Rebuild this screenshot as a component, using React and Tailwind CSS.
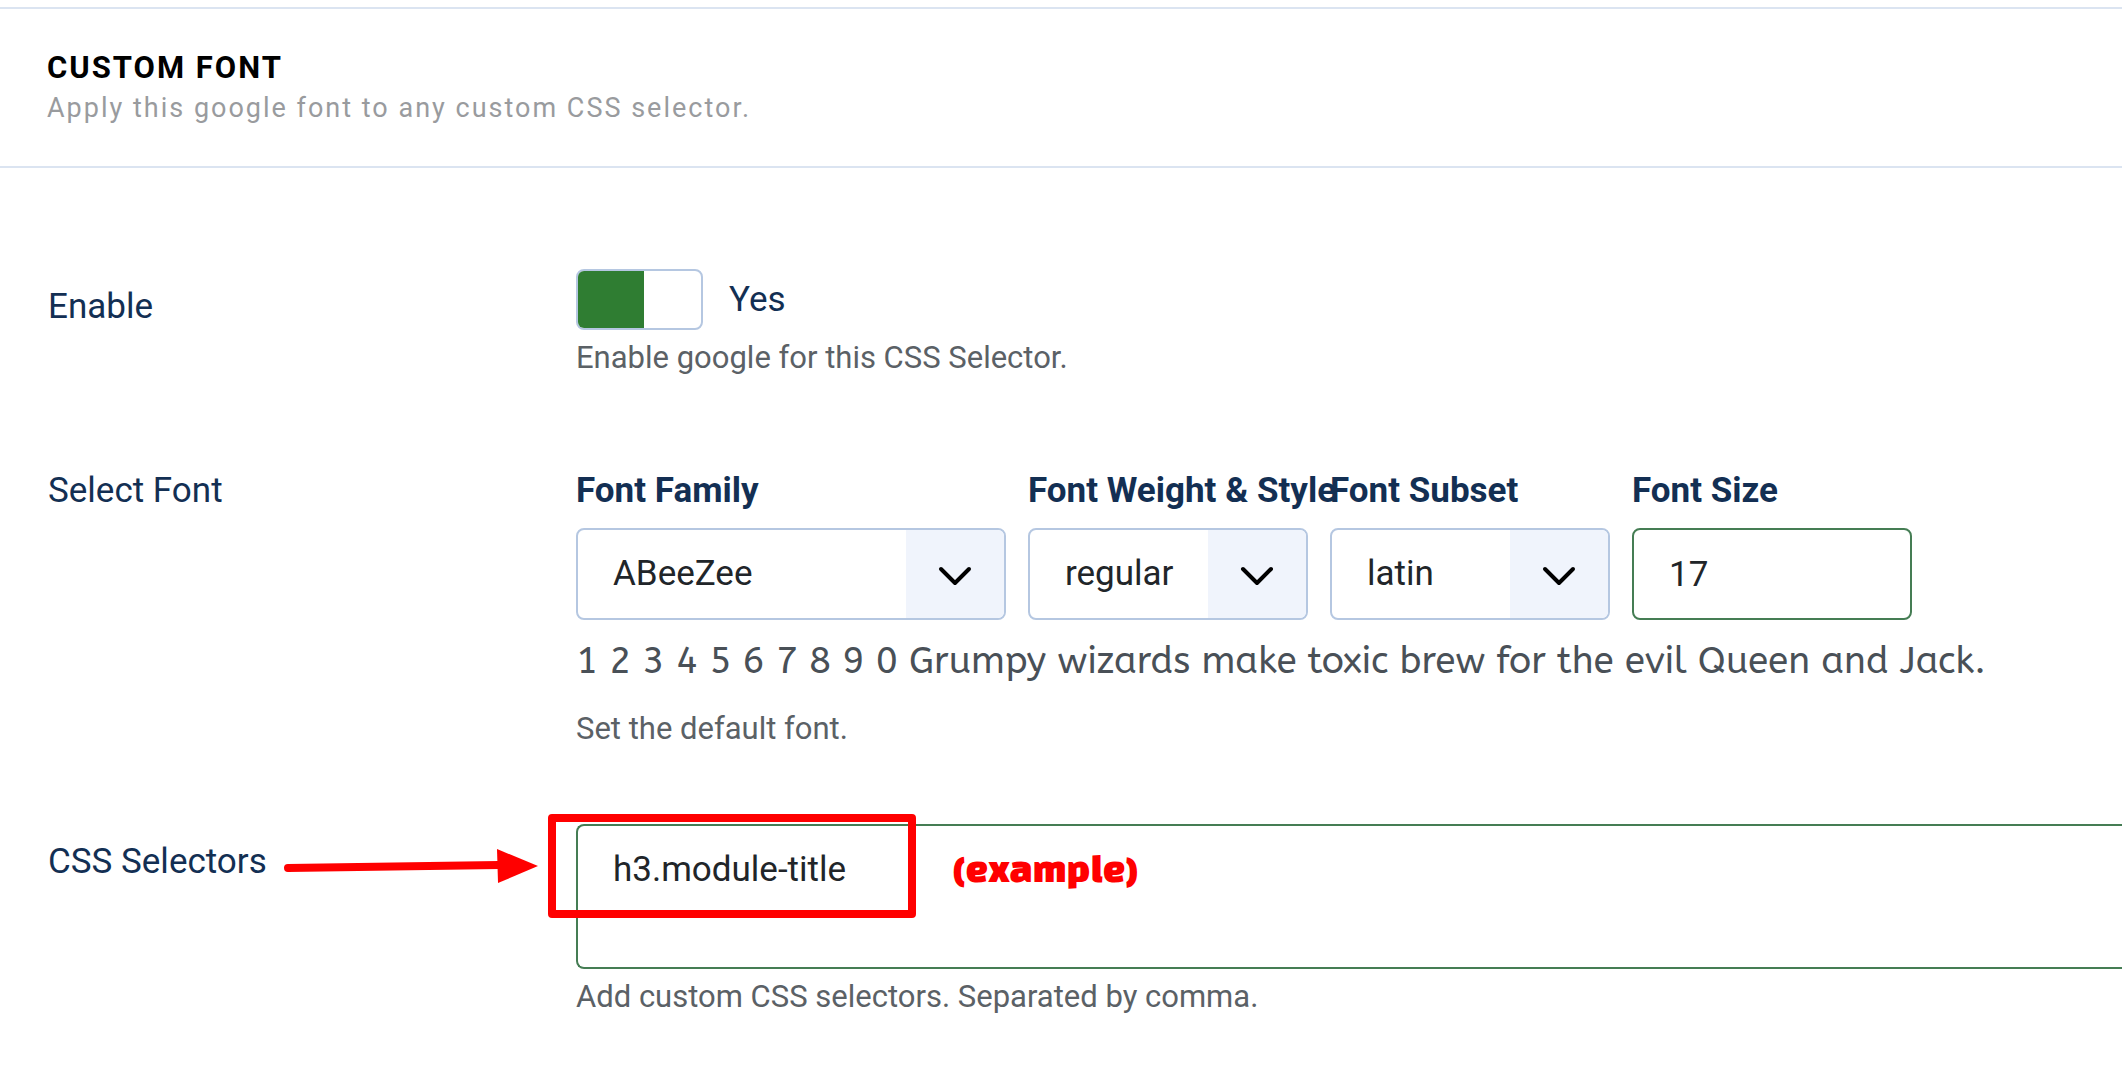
import React, { useState } from 'react';

const LABEL = 'text-[35px] leading-[52px] text-[#132f53]';
const BOX = 'h-[92px] w-full rounded-lg border-2 bg-white pl-[35px] text-[35px] text-[#212529] outline-none';

/** One settings line: the label on the left, the control on the right. */
const FieldRow = ({ label, htmlFor, labelExtra, children }) => (
  <div className="grid grid-cols-[528px_minmax(0,1fr)]">
    <div className="relative pt-3">
      <label htmlFor={htmlFor} className={LABEL}>{label}</label>
      {labelExtra}
    </div>
    <div>{children}</div>
  </div>
);

const Help = ({ className = 'mt-[5px]', children }) => (
  <p className={`${className} text-[31px] leading-[46px] text-[#5b6166]`}>{children}</p>
);

const Column = ({ id, label, className, children }) => (
  <div className={className}>
    <label htmlFor={id} className={`${LABEL} mb-[11px] block font-bold whitespace-nowrap`}>{label}</label>
    {children}
  </div>
);

const SelectBox = ({ id, options }) => (
  <div className="relative">
    <select id={id} defaultValue={options[0]} className={`${BOX} appearance-none border-[#b5c7e1] pr-[100px]`}>
      {options.map((option) => (
        <option key={option} value={option}>{option}</option>
      ))}
    </select>
    <span className="pointer-events-none absolute inset-y-[2px] right-[2px] flex w-[98px] items-center justify-center rounded-r-md bg-[#f0f4fc]">
      <svg viewBox="0 0 34 22" className="mt-1 h-[22px] w-[34px]" fill="none" stroke="#000" strokeWidth="4" strokeLinecap="round" strokeLinejoin="round">
        <path d="M3 4l14 14 14-14" />
      </svg>
    </span>
  </div>
);

const Toggle = ({ id, checked, onChange }) => (
  <span className="relative flex h-[61px] w-[127px] overflow-hidden rounded-lg border-2 border-[#b5c7e1] bg-white">
    <input
      id={id}
      type="checkbox"
      role="switch"
      checked={checked}
      onChange={onChange}
      className="absolute inset-0 z-10 cursor-pointer appearance-none"
    />
    <span className={checked ? 'w-[66px] bg-[#2f7d32]' : 'ml-auto w-[66px] bg-[#b5c7e1]'} />
  </span>
);

const Arrow = () => (
  <svg viewBox="0 0 256 36" className="absolute top-[24px] left-[235px] h-9 w-64">
    <path d="M5 20L216 17" stroke="#f00" strokeWidth="8" strokeLinecap="round" />
    <path d="M214 1l41 17-40 17z" fill="#f00" />
  </svg>
);

export default function App() {
  const [enabled, setEnabled] = useState(true);

  return (
    <div className="min-h-screen overflow-x-hidden bg-white pt-[7px] font-[Roboto,sans-serif]">
      <header className="border-y-2 border-[#dbe4f1] px-[47px] pt-[39px] pb-[38px]">
        <h2 className="text-[31px] leading-10 font-bold tracking-[2px] text-black uppercase">Custom Font</h2>
        <p className="text-[27px] leading-10 tracking-[2px] text-[#999b9e]">
          Apply this google font to any custom CSS selector.
        </p>
      </header>

      <form className="flex flex-col gap-[72px] pt-[101px] pb-10 pl-12">
        <FieldRow label="Enable" htmlFor="enable">
          <div className="flex items-center gap-[26px]">
            <Toggle id="enable" checked={enabled} onChange={() => setEnabled(!enabled)} />
            <span className={LABEL}>{enabled ? 'Yes' : 'No'}</span>
          </div>
          <Help>Enable google for this CSS Selector.</Help>
        </FieldRow>

        <FieldRow label="Select Font" htmlFor="font-family">
          <div className="flex gap-[22px] pt-3">
            <Column id="font-family" label="Font Family" className="w-[430px]">
              <SelectBox id="font-family" options={['ABeeZee', 'Abel', 'Lato']} />
            </Column>
            <Column id="font-weight" label="Font Weight & Style" className="w-[280px]">
              <SelectBox id="font-weight" options={['regular', 'italic']} />
            </Column>
            <Column id="font-subset" label="Font Subset" className="w-[280px]">
              <SelectBox id="font-subset" options={['latin', 'latin-ext']} />
            </Column>
            <Column id="font-size" label="Font Size" className="w-[280px]">
              <input id="font-size" type="text" defaultValue="17" className={`${BOX} border-[#457d54]`} />
            </Column>
          </div>
          <p className="mt-[14px] text-[37px] leading-[54px] whitespace-nowrap text-[#495057] font-['ABeeZee','Noto_Sans',sans-serif]">
            1 2 3 4 5 6 7 8 9 0 Grumpy wizards make toxic brew for the evil Queen and Jack.
          </p>
          <Help className="mt-[18px]">Set the default font.</Help>
        </FieldRow>

        <FieldRow label="CSS Selectors" htmlFor="selectors" labelExtra={<Arrow />}>
          <div className="relative">
            <textarea
              id="selectors"
              defaultValue="h3.module-title"
              className="block h-[145px] w-full resize-none rounded-l-lg border-2 border-r-0 border-[#457d54] bg-white py-[18px] pl-[35px] text-[35px] leading-[52px] text-[#212529] outline-none"
            />
            <span className="pointer-events-none absolute -top-[10px] -left-7 h-[104px] w-[368px] rounded-[4px] border-8 border-[#f00]" />
            <span className="pointer-events-none absolute top-[18px] left-[377px] text-[40px] leading-[52px] text-[#f00] font-['Changa_One','Open_Sans',sans-serif]">
              (example)
            </span>
          </div>
          <Help>Add custom CSS selectors. Separated by comma.</Help>
        </FieldRow>
      </form>
    </div>
  );
}
